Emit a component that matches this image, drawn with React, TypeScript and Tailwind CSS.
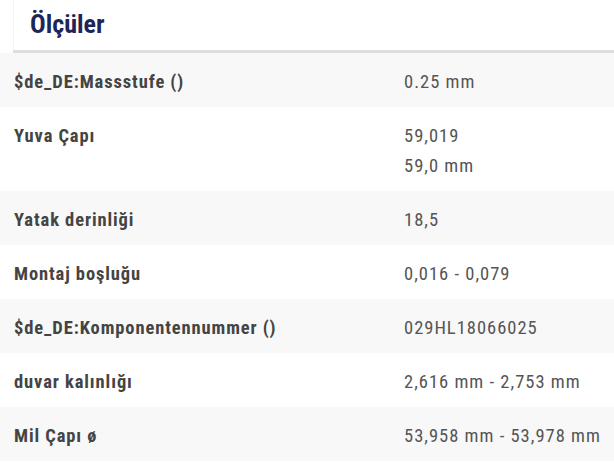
const rows: { label: string; values: string[] }[] = [
  { label: '$de_DE:Massstufe ()', values: ['0.25 mm'] },
  { label: 'Yuva Çapı', values: ['59,019', '59,0 mm'] },
  { label: 'Yatak derinliği', values: ['18,5'] },
  { label: 'Montaj boşluğu', values: ['0,016 - 0,079'] },
  { label: '$de_DE:Komponentennummer ()', values: ['029HL18066025'] },
  { label: 'duvar kalınlığı', values: ['2,616 mm - 2,753 mm'] },
  { label: 'Mil Çapı ø', values: ['53,958 mm - 53,978 mm'] },
];

export default function App() {
  return (
    <div
      className="h-[464px] w-[614px] overflow-hidden bg-white"
      style={{ fontFamily: '"Roboto Condensed", "Liberation Sans Narrow", Roboto, sans-serif' }}
    >
      <div className="ml-[13px] h-[50px] border-l border-[#f3f3f3] pl-[16px] pt-[6px]">
        <h2 className="text-[26px] font-bold leading-[36px] text-[#1e2659]">Ölçüler</h2>
      </div>
      <div className="ml-[13px] h-[3px] bg-[#dedede]"></div>
      <div className="flex flex-col">
        {rows.map((row, i) => (
          <div
            key={row.label}
            className={`flex pb-[10px] pl-[14px] pt-[14px] ${i % 2 === 0 ? 'bg-[#f8f8f8]' : 'bg-white'}`}
          >
            <div className="w-[390px] text-[18.5px] font-bold leading-[30px] tracking-[0.9px] text-[#444]">
              {row.label}
            </div>
            <div className="flex flex-col text-[18.5px] leading-[30px] tracking-[1px] text-[#555]">
              {row.values.map((v) => (
                <span key={v}>{v}</span>
              ))}
            </div>
          </div>
        ))}
      </div>
    </div>
  );
}
